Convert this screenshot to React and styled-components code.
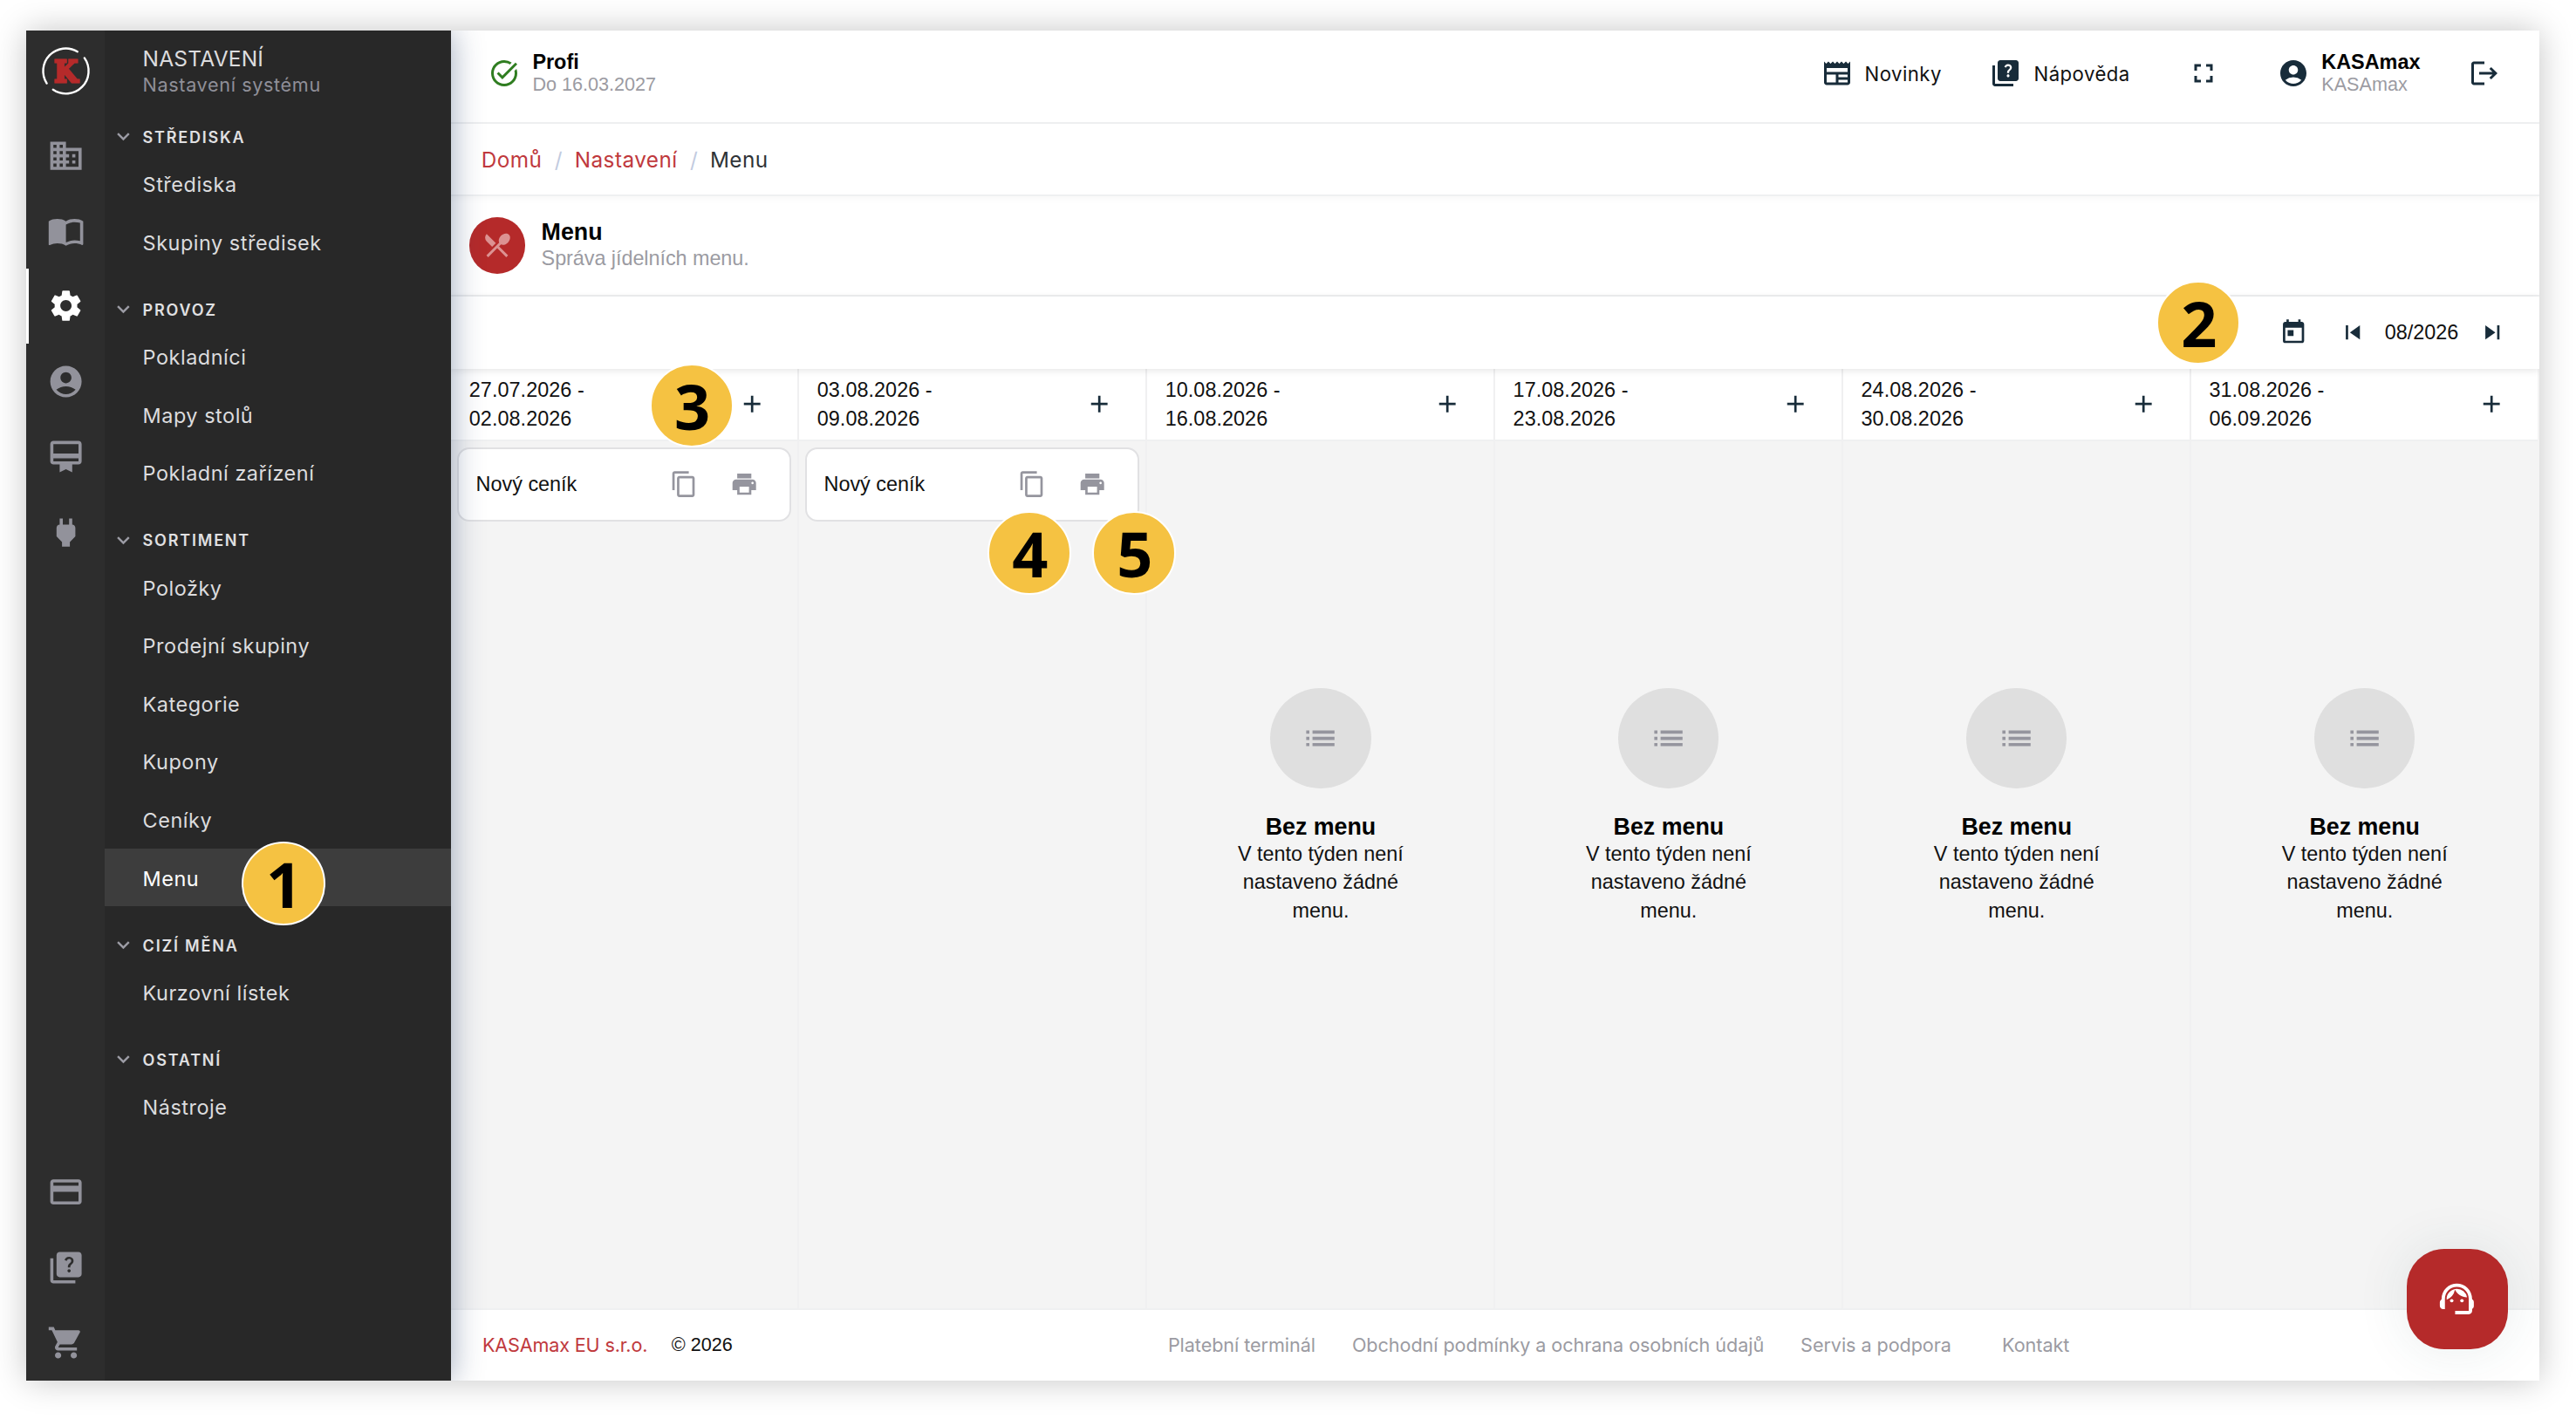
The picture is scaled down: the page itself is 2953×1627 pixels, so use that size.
import styled, { createGlobalStyle } from 'styled-components';
import {
  MdAccountCircle,
  MdAdd,
  MdCardMembership,
  MdContentCopy,
  MdCreditCard,
  MdDomain,
  MdExpandMore,
  MdFullscreen,
  MdImportContacts,
  MdList,
  MdNewspaper,
  MdPower,
  MdPrint,
  MdQuiz,
  MdRestaurantMenu,
  MdSettings,
  MdShoppingCart,
  MdSkipNext,
  MdSkipPrevious,
  MdSupportAgent,
  MdTaskAlt,
  MdToday,
} from 'react-icons/md';

const helvetica = "'Liberation Sans', Arial, sans-serif";
const inter = "Inter, 'Noto Sans', sans-serif";
const red = '#b52a2a';
const navy = '#182c3a';
const grey = '#95959e';
const line = '#eff0f1';

const GlobalStyle = createGlobalStyle`
  * {
    box-sizing: border-box;
  }

  body {
    margin: 0;
    background: #fff;
    font-family: ${helvetica};
    font-size: 23.4px;
    color: #111;
  }

  svg {
    display: block;
    flex-shrink: 0;
  }
`;

const Page = styled.div`
  position: relative;
  width: 2953px;
  height: 1627px;
  padding: 35px 0 0 30px;
  overflow: hidden;
`;

const Window = styled.div`
  position: relative;
  display: flex;
  width: 2880.6px;
  height: 1548px;
  background: #fff;
  box-shadow: 0 0 36px rgba(0, 0, 0, 0.23);
`;

// Clips the side menu shadow to the window
const Layout = styled.div`
  display: flex;
  flex: 1;
  overflow: hidden;
`;

// Icon rail
const Rail = styled.div`
  position: relative;
  z-index: 2;
  display: flex;
  flex-direction: column;
  width: 90px;
  background: #2d2d2d;
`;

const Logo = styled.div`
  display: flex;
  justify-content: center;
  height: 100px;
  padding-top: 16px;
`;

const RailItem = styled.a`
  display: flex;
  align-items: center;
  justify-content: center;
  height: 86.4px;
  padding-right: 2px;
  border-left: 3px solid ${(p) => (p.$active ? '#fff' : 'transparent')};
  color: ${(p) => (p.$active ? '#fff' : '#92929b')};
`;

const Spacer = styled.div`
  flex: 1;
`;

// Side menu
const SideMenu = styled.nav`
  position: relative;
  z-index: 1;
  width: 397px;
  padding-top: 18.4px;
  background: #282828;
  box-shadow: 0 0 34px rgba(43, 68, 110, 0.46);
  font-family: ${inter};
  letter-spacing: 0.55px;
  color: #dcdcde;
`;

const SideTitle = styled.div`
  padding-left: 43.6px;
  font-size: 24.5px;
  letter-spacing: 0.2px;
  line-height: 29.2px;
`;

const SideSubtitle = styled.div`
  padding-left: 43.6px;
  margin-bottom: 0.7px;
  font-size: 21.6px;
  letter-spacing: 0.65px;
  line-height: 29.2px;
  color: #8f8f98;
`;

const SectionTitle = styled.div`
  display: flex;
  align-items: flex-end;
  height: 64.8px;
  padding: 0 0 7.5px 7.4px;
  font-size: 18px;
  font-weight: 600;
  letter-spacing: 1.8px;
  line-height: 24px;
  color: #e0e0e2;

  svg {
    margin-right: 7.4px;
    margin-bottom: -1px;
    color: #9c9ca5;
  }
`;

const SideItem = styled.a`
  display: flex;
  align-items: center;
  height: 66.6px;
  padding: 2px 0 0 43.6px;
  background: ${(p) => (p.$active ? '#3d3d3d' : 'none')};
  color: ${(p) => (p.$active ? '#fff' : 'inherit')};
`;

// Main area
const Main = styled.main`
  display: flex;
  flex-direction: column;
  flex: 1;
`;

const TopBar = styled.header`
  display: flex;
  align-items: center;
  gap: 55.6px;
  height: 107px;
  padding: 0 44.6px 7.5px 43.4px;
  border-bottom: 2px solid ${line};
  color: ${navy};
`;

const TopItem = styled.div`
  display: flex;
  align-items: center;
  gap: 14px;
`;

const FullscreenButton = styled.div`
  padding: 0 11.6px 0 10.8px;
`;

const TopLabel = styled.span`
  padding-top: 1px;
  font-family: ${inter};
  font-size: 22.2px;
  letter-spacing: 0.45px;
  color: #111;
`;

const Stack = styled.div`
  padding-top: 1px;
  line-height: 26.4px;
`;

const StackTitle = styled.div`
  font-weight: 700;
  color: #000;
`;

const StackText = styled.div`
  font-size: 21.6px;
  color: #9b9ba2;
`;

const Breadcrumb = styled.div`
  display: flex;
  align-items: center;
  height: 83px;
  padding-left: 34.8px;
  border-bottom: 2px solid ${line};
  box-shadow: 0 3px 8px rgba(0, 0, 0, 0.03);
  font-family: ${inter};
  font-size: 24.3px;
  letter-spacing: 0.45px;
`;

const Crumb = styled.span`
  color: ${(p) => (p.$current ? '#2f3337' : '#c0393d')};

  &:not(:first-child)::before {
    content: '/';
    margin: 0 13.7px 0 14.5px;
    color: #c2cbdf;
  }
`;

const PageHeader = styled.div`
  display: flex;
  align-items: center;
  gap: 18.2px;
  height: 115px;
  padding-left: 20.6px;
  border-bottom: 2px solid ${line};
`;

const PageIcon = styled.div`
  display: flex;
  align-items: center;
  justify-content: center;
  width: 64.8px;
  height: 64.8px;
  border-radius: 50%;
  background: ${red};
  color: #dc9292;
`;

const PageTitle = styled.div`
  font-size: 26.8px;
  font-weight: 700;
  line-height: 30px;
  color: #000;
`;

const PageText = styled.div`
  margin-bottom: 1px;
  letter-spacing: -0.05px;
  line-height: 30px;
  color: #9b9ba2;
`;

const Toolbar = styled.div`
  position: relative;
  display: flex;
  align-items: center;
  justify-content: flex-end;
  height: 82.6px;
  padding-right: 37px;
  box-shadow: 0 2px 8px rgba(0, 0, 0, 0.1);
  color: ${navy};
`;

const Month = styled.span`
  margin: 0 22.9px 0 20px;
  color: #111;
`;

const TodayButton = styled.div`
  margin-right: 36px;
`;

const Weeks = styled.div`
  display: grid;
  grid-template-columns: repeat(6, 1fr);
  flex: 1;
  background: #f4f4f4;
`;

const Week = styled.section`
  border-right: 2px solid #f0f0f1;

  &:last-child {
    border-right-color: transparent;
  }
`;

const WeekHeader = styled.div`
  display: flex;
  align-items: center;
  justify-content: space-between;
  height: 83px;
  padding: 1px 36px 0 20.8px;
  border-bottom: 2px solid ${line};
  background: #fff;
  letter-spacing: 0.05px;
  line-height: 33px;
  color: ${navy};
`;

const WeekRange = styled.div`
  width: 160px;
  color: #111;
`;

const MenuCard = styled.div`
  display: flex;
  align-items: center;
  gap: 36px;
  height: 85px;
  margin: 7.5px 7.2px 0 7px;
  padding: 0 35.6px 0 19.6px;
  border: 2px solid #e1e1e3;
  border-radius: 14px;
  background: #fff;
  color: ${grey};
`;

const MenuName = styled.span`
  flex: 1;
  color: #111;
`;

const Empty = styled.div`
  display: flex;
  flex-direction: column;
  align-items: center;
  padding: 283.4px 0 0 1.2px;
  text-align: center;
`;

const EmptyIcon = styled.div`
  display: flex;
  align-items: center;
  justify-content: center;
  width: 115.2px;
  height: 115.2px;
  margin-bottom: 28.6px;
  border-radius: 50%;
  background: #dfdfdf;
  color: ${grey};
`;

const EmptyTitle = styled.div`
  font-size: 26.8px;
  font-weight: 700;
  line-height: 30px;
  color: #000;
`;

const EmptyText = styled.div`
  width: 220px;
  line-height: 32.5px;
`;

const Footer = styled.footer`
  display: flex;
  align-items: center;
  height: 83px;
  padding: 0 0 1px 35.9px;
  border-top: 2px solid ${line};
  background: #fff;
  font-size: 21.6px;
`;

const Company = styled.div`
  display: flex;
  gap: 27.5px;
  width: 786px;
`;

const CompanyLink = styled.a`
  font-family: ${inter};
  letter-spacing: -0.15px;
  color: #c0393d;
`;

const FooterLink = styled.a`
  margin-right: 42px;
  min-width: ${(p) => p.$minWidth || 0}px;
  font-family: ${inter};
  letter-spacing: -0.06px;
  color: #9b9ba2;
`;

const SupportButton = styled.button`
  position: absolute;
  right: 36px;
  bottom: 36px;
  z-index: 2;
  display: flex;
  align-items: center;
  justify-content: center;
  width: 115.2px;
  height: 115.2px;
  padding: 0 1px 0 0;
  border: 0;
  border-radius: 43px;
  background: ${red};
  box-shadow: 0 0 60px rgba(40, 80, 80, 0.1);
  color: #fff;
`;

// Numbered marker lying over the screen, placed by its centre
const Marker = styled.div`
  position: absolute;
  left: ${(p) => p.$x}px;
  top: ${(p) => p.$y}px;
  z-index: 3;
  display: flex;
  align-items: center;
  justify-content: center;
  width: 96px;
  height: 96px;
  margin: -48px 0 0 -48px;
  padding: 0 0 1px 1px;
  border: 2px solid #fff;
  border-radius: 50%;
  background: #f5c242;
  font-family: 'Open Sans', 'Noto Sans', sans-serif;
  font-size: 72px;
  font-weight: 700;
  line-height: 90px;
  color: #000;
`;

const railTop = [
  { icon: MdDomain },
  { icon: MdImportContacts },
  { icon: MdSettings, active: true },
  { icon: MdAccountCircle },
  { icon: MdCardMembership },
  { icon: MdPower },
];

const railBottom = [{ icon: MdCreditCard }, { icon: MdQuiz }, { icon: MdShoppingCart }];

const sections = [
  { title: 'STŘEDISKA', items: ['Střediska', 'Skupiny středisek'] },
  { title: 'PROVOZ', items: ['Pokladníci', 'Mapy stolů', 'Pokladní zařízení'] },
  {
    title: 'SORTIMENT',
    items: ['Položky', 'Prodejní skupiny', 'Kategorie', 'Kupony', 'Ceníky', 'Menu'],
  },
  { title: 'CIZÍ MĚNA', items: ['Kurzovní lístek'] },
  { title: 'OSTATNÍ', items: ['Nástroje'] },
];

const weeks = [
  { from: '27.07.2026', to: '02.08.2026', menu: 'Nový ceník' },
  { from: '03.08.2026', to: '09.08.2026', menu: 'Nový ceník' },
  { from: '10.08.2026', to: '16.08.2026' },
  { from: '17.08.2026', to: '23.08.2026' },
  { from: '24.08.2026', to: '30.08.2026' },
  { from: '31.08.2026', to: '06.09.2026' },
];

const markers = [
  { n: 1, x: 325, y: 1013 },
  { n: 2, x: 2520.3, y: 370 },
  { n: 3, x: 793, y: 465 },
  { n: 4, x: 1180.3, y: 634 },
  { n: 5, x: 1300.3, y: 634 },
];

function BrandMark() {
  return (
    <svg width="60" height="60" viewBox="0 0 60 60">
      <g fill="none" stroke="#fff" strokeWidth="2.4" strokeLinecap="round">
        <path d="M8.6 44.6A26 26 0 0 1 43.8 8.2" />
        <path d="M51.8 15.4A26 26 0 0 1 15.8 51.8" />
      </g>
      <text
        x="17"
        y="42.7"
        fontFamily="DejaVu Serif, serif"
        fontSize="34"
        fontWeight="700"
        textLength="27"
        lengthAdjust="spacingAndGlyphs"
        fill={red}
        stroke={red}
        strokeWidth="3"
      >
        K
      </text>
    </svg>
  );
}

function LogoutIcon() {
  return (
    <svg width="36" height="36" viewBox="0 0 24 24" fill="currentColor">
      <path d="M4 21c-1.1 0-2-.9-2-2V5c0-1.1.9-2 2-2h8v2H4v14h8v2H4z" />
      <path d="M17.2 7.3 22 12l-4.8 4.7-1.4-1.4 2.4-2.3H8v-2h10.2l-2.4-2.3z" />
    </svg>
  );
}

function App() {
  return (
    <>
      <GlobalStyle />
      <Page>
        <Window>
          <Layout>
            <Rail>
              <Logo>
                <BrandMark />
              </Logo>
              {railTop.map(({ icon: Icon, active }, i) => (
                <RailItem key={i} $active={active}>
                  <Icon size={43.2} />
                </RailItem>
              ))}
              <Spacer />
              {railBottom.map(({ icon: Icon }, i) => (
                <RailItem key={i}>
                  <Icon size={43.2} />
                </RailItem>
              ))}
            </Rail>

            <SideMenu>
              <SideTitle>NASTAVENÍ</SideTitle>
              <SideSubtitle>Nastavení systému</SideSubtitle>
              {sections.map((section) => (
                <div key={section.title}>
                  <SectionTitle>
                    <MdExpandMore size={28.8} />
                    {section.title}
                  </SectionTitle>
                  {section.items.map((item) => (
                    <SideItem key={item} $active={item === 'Menu'}>
                      {item}
                    </SideItem>
                  ))}
                </div>
              ))}
            </SideMenu>

            <Main>
              <TopBar>
                <TopItem>
                  <MdTaskAlt size={36} color="#2f7d20" />
                  <Stack>
                    <StackTitle>Profi</StackTitle>
                    <StackText>Do 16.03.2027</StackText>
                  </Stack>
                </TopItem>
                <Spacer />
                <TopItem>
                  <MdNewspaper size={36} />
                  <TopLabel>Novinky</TopLabel>
                </TopItem>
                <TopItem>
                  <MdQuiz size={36} />
                  <TopLabel>Nápověda</TopLabel>
                </TopItem>
                <FullscreenButton>
                  <MdFullscreen size={36} />
                </FullscreenButton>
                <TopItem>
                  <MdAccountCircle size={36} />
                  <Stack>
                    <StackTitle>KASAmax</StackTitle>
                    <StackText>KASAmax</StackText>
                  </Stack>
                </TopItem>
                <LogoutIcon />
              </TopBar>

              <Breadcrumb>
                <Crumb>Domů</Crumb>
                <Crumb>Nastavení</Crumb>
                <Crumb $current>Menu</Crumb>
              </Breadcrumb>

              <PageHeader>
                <PageIcon>
                  <MdRestaurantMenu size={36} />
                </PageIcon>
                <div>
                  <PageTitle>Menu</PageTitle>
                  <PageText>Správa jídelních menu.</PageText>
                </div>
              </PageHeader>

              <Toolbar>
                <TodayButton>
                  <MdToday size={32.4} />
                </TodayButton>
                <MdSkipPrevious size={32.4} />
                <Month>08/2026</Month>
                <MdSkipNext size={32.4} />
              </Toolbar>

              <Weeks>
                {weeks.map((week) => (
                  <Week key={week.from}>
                    <WeekHeader>
                      <WeekRange>
                        {week.from} - {week.to}
                      </WeekRange>
                      <MdAdd size={32.4} />
                    </WeekHeader>
                    {week.menu ? (
                      <MenuCard>
                        <MenuName>{week.menu}</MenuName>
                        <MdContentCopy size={32.4} />
                        <MdPrint size={32.4} />
                      </MenuCard>
                    ) : (
                      <Empty>
                        <EmptyIcon>
                          <MdList size={43.2} />
                        </EmptyIcon>
                        <EmptyTitle>Bez menu</EmptyTitle>
                        <EmptyText>V tento týden není nastaveno žádné menu.</EmptyText>
                      </Empty>
                    )}
                  </Week>
                ))}
              </Weeks>

              <Footer>
                <Company>
                  <CompanyLink>KASAmax EU s.r.o.</CompanyLink>
                  <span>© 2026</span>
                </Company>
                <FooterLink>Platební terminál</FooterLink>
                <FooterLink>Obchodní podmínky a ochrana osobních údajů</FooterLink>
                <FooterLink $minWidth={189}>Servis a podpora</FooterLink>
                <FooterLink>Kontakt</FooterLink>
              </Footer>
            </Main>
          </Layout>

          <SupportButton aria-label="Podpora">
            <MdSupportAgent size={46.8} />
          </SupportButton>
        </Window>

        {markers.map((m) => (
          <Marker key={m.n} $x={m.x} $y={m.y}>
            {m.n}
          </Marker>
        ))}
      </Page>
    </>
  );
}

export default App;
